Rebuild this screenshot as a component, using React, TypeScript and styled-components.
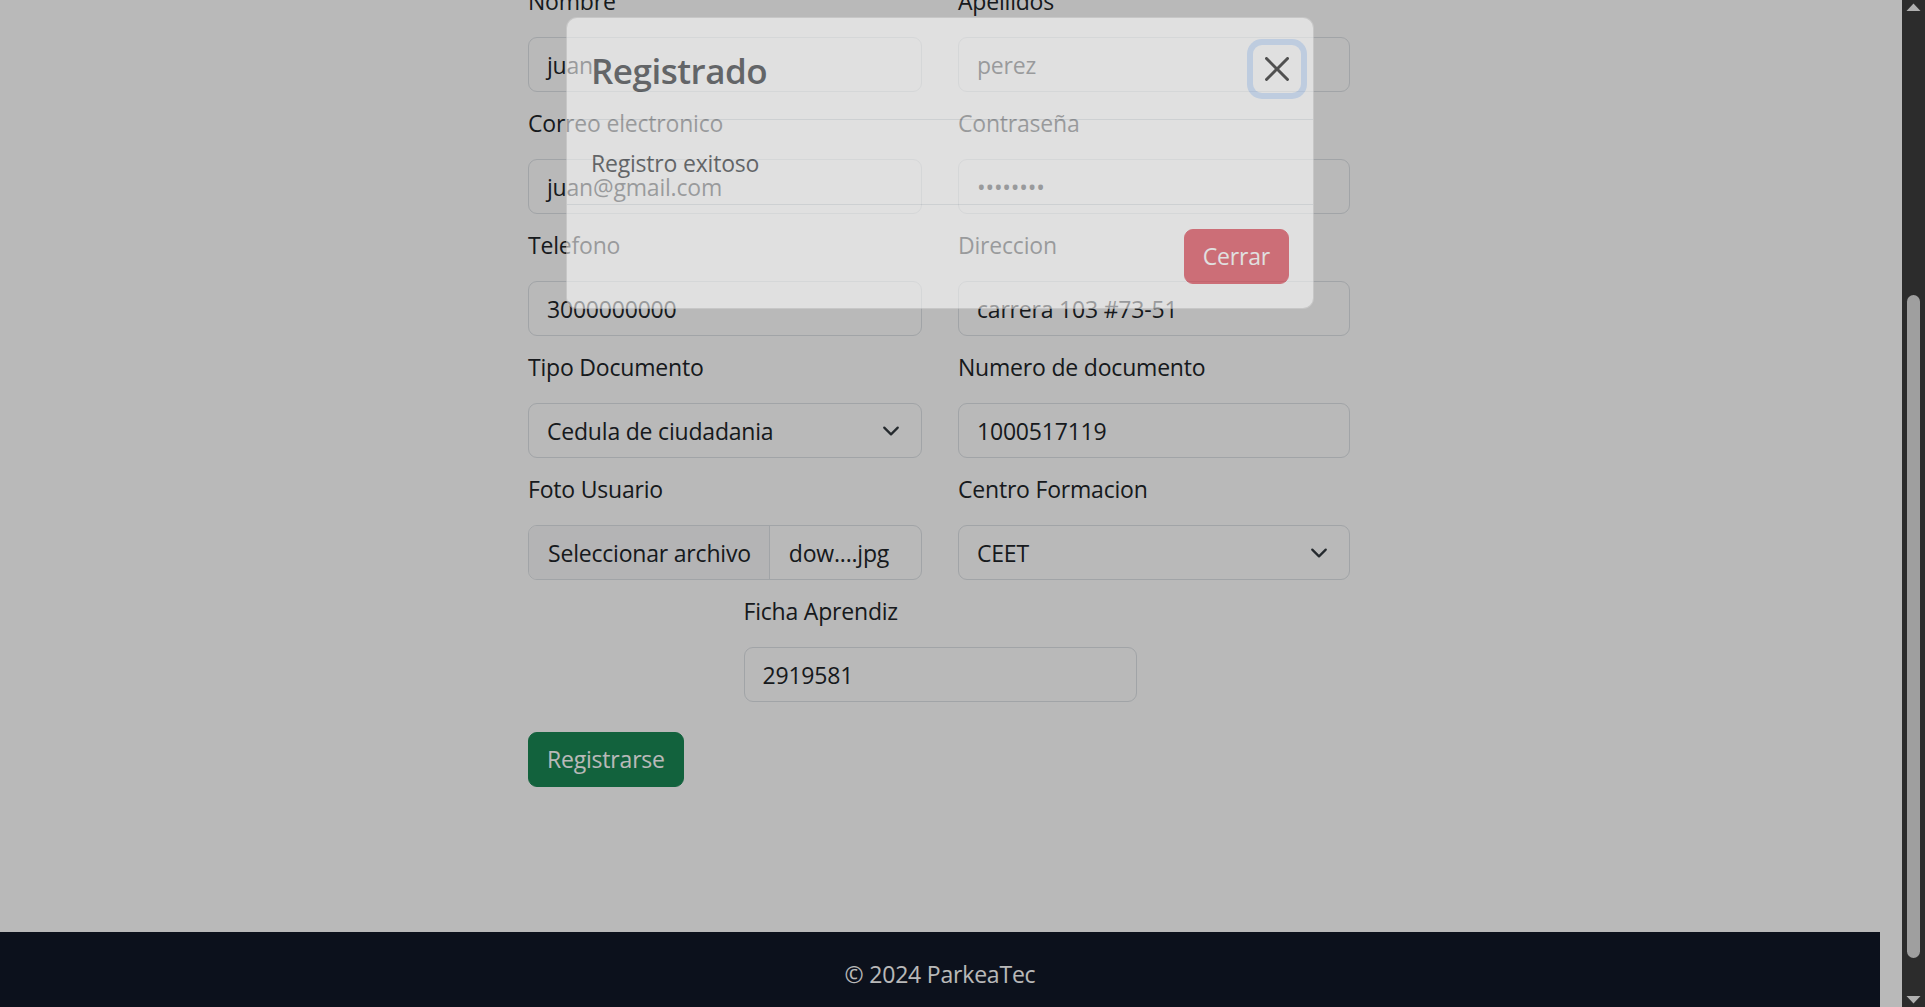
import * as React from 'react'
import styled, { createGlobalStyle, css } from 'styled-components'

const GlobalStyle = createGlobalStyle`
  html, body {
    margin: 0;
    padding: 0;
    height: 100%;
    overflow: hidden;
  }
  body {
    font-family: 'Open Sans', 'Noto Sans', Arial, sans-serif;
    font-size: 23px;
    letter-spacing: -0.2px;
    color: #212529;
    background: #fff;
  }
  #root {
    height: 100%;
  }
`

const Viewport = styled.div`
  display: flex;
  height: 100vh;
  width: 100%;
`

const Screen = styled.div`
  position: relative;
  flex: 1;
  min-width: 0;
  overflow: hidden;
`

const Page = styled.div`
  display: flex;
  flex-direction: column;
  height: 100%;
  box-sizing: border-box;
  padding-right: 22px;
  background: #fff;
`

const Main = styled.main`
  flex: 1;
  display: flex;
  justify-content: center;
  min-height: 0;
`

// the page is scrolled, the first label row is cut at the top
const Form = styled.form`
  width: 822px;
  margin: -17px 2px 0 0;
  display: grid;
  grid-template-columns: 394px 392px;
  column-gap: 36px;
  align-content: start;
`

const Field = styled.div<{ $centered?: boolean }>`
  display: flex;
  flex-direction: column;
  margin-bottom: 13px;

  ${(p) => p.$centered && css`
    grid-column: 1 / -1;
    justify-self: center;
    width: 393px;
    margin-left: 2px;
  `}
`

const Label = styled.label`
  line-height: 36px;
  margin-bottom: 18px;
`

const Control = styled.div`
  height: 55px;
  box-sizing: border-box;
  display: flex;
  align-items: center;
  justify-content: space-between;
  padding: 0 18px;
  border: 1px solid #dee2e6;
  border-radius: 9px;
  background: #fff;
  line-height: 36px;
  white-space: nowrap;
  overflow: hidden;
`

const FileControl = styled(Control)`
  padding: 0;
  justify-content: flex-start;
`

const FileButton = styled.span`
  height: 100%;
  display: flex;
  align-items: center;
  padding: 0 18px 0 19px;
  background: #f8f9fa;
  border-right: 1px solid #dee2e6;
`

const FileName = styled.span`
  padding-left: 19px;
`

const Button = styled.button<{ $variant: 'success' | 'danger' }>`
  font-family: inherit;
  font-size: 23px;
  letter-spacing: -0.2px;
  line-height: 35px;
  padding: 9px 18px;
  border-radius: 9px;
  color: #fff;
  cursor: pointer;
  background: ${(p) => (p.$variant === 'success' ? '#198754' : '#dc3545')};
  border: 1px solid ${(p) => (p.$variant === 'success' ? '#198754' : '#dc3545')};
`

const SubmitButton = styled(Button)`
  grid-column: 1 / -1;
  justify-self: start;
  margin-top: 17px;
`

const Footer = styled.footer`
  background: #111827;
  color: #fff;
  text-align: center;
  line-height: 36px;
  padding: 24px 0 15px;
`

const Backdrop = styled.div`
  position: absolute;
  inset: 0;
  background: rgba(0, 0, 0, 0.275);
`

const ModalLayer = styled.div`
  position: absolute;
  inset: 0;
  padding: 17px 22px 0 0;
  display: flex;
  justify-content: center;
  align-items: flex-start;
`

const ModalContent = styled.div`
  width: 748px;
  box-sizing: border-box;
  background: #fff;
  border: 1px solid rgba(0, 0, 0, 0.175);
  border-radius: 11px;
  opacity: 0.56;
`

const ModalHeader = styled.div`
  display: flex;
  align-items: center;
  padding: 24px;
  border-bottom: 1px solid #dee2e6;
`

const ModalTitle = styled.h1`
  margin: 0;
  font-size: 35px;
  font-weight: 600;
  letter-spacing: -0.5px;
  line-height: 53px;
  padding-top: 2px;
  margin-bottom: -2px;
`

const CloseButton = styled.button`
  width: 48px;
  height: 48px;
  margin: -12px -12px -12px auto;
  padding: 0;
  border: none;
  border-radius: 9px;
  background: transparent;
  box-shadow: 0 0 0 6px rgba(13, 110, 253, 0.25);
  display: flex;
  align-items: center;
  justify-content: center;
`

const ModalBody = styled.div`
  padding: 25px 24px 23px;
  line-height: 36px;
`

const ModalFooter = styled.div`
  display: flex;
  justify-content: flex-end;
  padding: 18px;
  border-top: 1px solid #dee2e6;

  ${Button} {
    margin: 6px;
  }
`

const Scrollbar = styled.div`
  width: 23px;
  flex: none;
  background: #2c2c2c;
  display: flex;
  flex-direction: column;
  align-items: center;
`

const ScrollArrow = styled.svg`
  flex: none;
  display: block;
`

const Track = styled.div`
  flex: 1;
  display: flex;
  flex-direction: column;
  align-items: center;
`

const Thumb = styled.div<{ $top: number; $height: number }>`
  width: 13px;
  border-radius: 7px;
  background: #9f9f9f;
  margin-top: ${(p) => p.$top}px;
  height: ${(p) => p.$height}px;
`

const Chevron = () => (
  <svg width="24" height="18" viewBox="0 0 16 16" fill="none">
    <path d="m2 5 6 6 6-6" stroke="#343a40" strokeWidth="2" strokeLinecap="round" strokeLinejoin="round" />
  </svg>
)

const CloseIcon = () => (
  <svg width="24" height="24" viewBox="0 0 16 16" fill="#000">
    <path d="M.293.293a1 1 0 0 1 1.414 0L8 6.586 14.293.293a1 1 0 1 1 1.414 1.414L9.414 8l6.293 6.293a1 1 0 0 1-1.414 1.414L8 9.414l-6.293 6.293a1 1 0 0 1-1.414-1.414L6.586 8 .293 1.707a1 1 0 0 1 0-1.414z" />
  </svg>
)

const fields = [
  { label: 'Nombre', value: 'juan' },
  { label: 'Apellidos', value: 'perez' },
  { label: 'Correo electronico', value: 'juan@gmail.com' },
  { label: 'Contraseña', value: '••••••••' },
  { label: 'Telefono', value: '3000000000' },
  { label: 'Direccion', value: 'carrera 103 #73-51' },
]

export default function App() {
  return (
    <>
      <GlobalStyle />
      <Viewport>
        <Screen>
          <Page>
            <Main>
              <Form onSubmit={(e) => e.preventDefault()}>
                {fields.map((f) => (
                  <Field key={f.label}>
                    <Label>{f.label}</Label>
                    <Control>{f.value}</Control>
                  </Field>
                ))}
                <Field>
                  <Label>Tipo Documento</Label>
                  <Control>
                    <span>Cedula de ciudadania</span>
                    <Chevron />
                  </Control>
                </Field>
                <Field>
                  <Label>Numero de documento</Label>
                  <Control>1000517119</Control>
                </Field>
                <Field>
                  <Label>Foto Usuario</Label>
                  <FileControl>
                    <FileButton>Seleccionar archivo</FileButton>
                    <FileName>dow....jpg</FileName>
                  </FileControl>
                </Field>
                <Field>
                  <Label>Centro Formacion</Label>
                  <Control>
                    <span>CEET</span>
                    <Chevron />
                  </Control>
                </Field>
                <Field $centered>
                  <Label>Ficha Aprendiz</Label>
                  <Control>2919581</Control>
                </Field>
                <SubmitButton type="submit" $variant="success">Registrarse</SubmitButton>
              </Form>
            </Main>
            <Footer>© 2024 ParkeaTec</Footer>
          </Page>
          <Backdrop />
          <ModalLayer>
            <ModalContent>
              <ModalHeader>
                <ModalTitle>Registrado</ModalTitle>
                <CloseButton aria-label="Close">
                  <CloseIcon />
                </CloseButton>
              </ModalHeader>
              <ModalBody>Registro exitoso</ModalBody>
              <ModalFooter>
                <Button $variant="danger">Cerrar</Button>
              </ModalFooter>
            </ModalContent>
          </ModalLayer>
        </Screen>
        <Scrollbar>
          <ScrollArrow width="23" height="17" viewBox="0 0 23 17">
            <path d="M4.5 11 L11.5 3.5 L18.5 11 Z" fill="#b0b0b0" />
          </ScrollArrow>
          <Track>
            <Thumb $top={278} $height={663} />
          </Track>
          <ScrollArrow width="23" height="17" viewBox="0 0 23 17">
            <path d="M4.5 6 L11.5 13.5 L18.5 6 Z" fill="#b0b0b0" />
          </ScrollArrow>
        </Scrollbar>
      </Viewport>
    </>
  )
}
